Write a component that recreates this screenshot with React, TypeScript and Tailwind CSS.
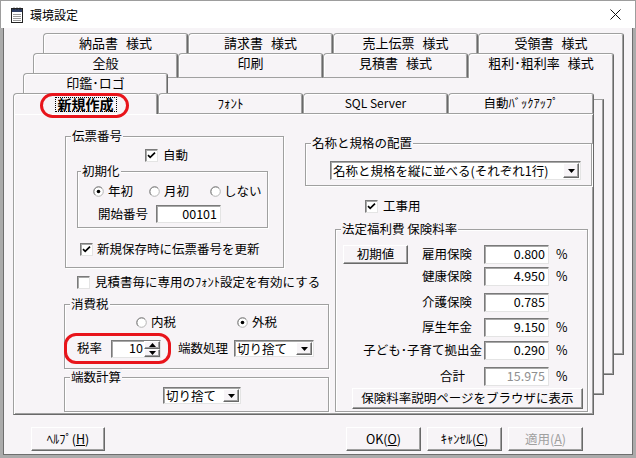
import React from "react";

const sunken =
  "bg-white border border-t-[#7a7a7a] border-l-[#7a7a7a] border-r-[#e4e4e4] border-b-[#e4e4e4] shadow-[inset_1px_1px_0_#a8a8a8]";
const raised =
  "bg-[#f7f4f7] border border-t-white border-l-white border-r-[#696969] border-b-[#696969] shadow-[inset_-1px_-1px_0_#a0a0a0]";

function Check({ checked = false }: { checked?: boolean }) {
  return (
    <span className={`inline-flex h-[13px] w-[13px] shrink-0 items-center justify-center ${sunken}`}>
      {checked && (
        <svg width="9" height="9" viewBox="0 0 9 9">
          <path d="M1 4.2 L3.2 6.4 L8 1.6" fill="none" stroke="#000" strokeWidth="1.7" />
        </svg>
      )}
    </span>
  );
}

function Radio({ on = false }: { on?: boolean }) {
  return (
    <svg width="11" height="11" viewBox="0 0 11 11" className="shrink-0">
      <circle cx="5.5" cy="5.5" r="4.8" fill="#fff" stroke="#b4b4b4" />
      <path d="M2.11 8.89 A4.8 4.8 0 0 1 8.89 2.11" fill="none" stroke="#808080" />
      {on && <circle cx="5.5" cy="5.5" r="1.8" fill="#000" />}
    </svg>
  );
}

function Group({
  title,
  className = "",
  titleClass = "ml-[5px]",
  children,
}: {
  title: string;
  className?: string;
  titleClass?: string;
  children?: React.ReactNode;
}) {
  return (
    <div className={`border border-[#a0a0a0] shadow-[inset_1px_1px_0_#ffffff,1px_1px_0_#ffffff] ${className}`}>
      <div className={`-mt-[9px] w-fit bg-[#f7f4f7] px-[1px] leading-[16px] ${titleClass}`}>{title}</div>
      {children}
    </div>
  );
}

function Field({ value, className = "", disabled = false }: { value: string; className?: string; disabled?: boolean }) {
  return (
    <div
      className={`${sunken} flex items-center justify-end pr-[3px] leading-none ${disabled ? "text-[#8f8f8f]" : ""} ${className}`}
    >
      {value}
    </div>
  );
}

function Dropdown({ text, className = "" }: { text: string; className?: string }) {
  return (
    <div className={`${sunken} flex items-stretch p-[1px] ${className}`}>
      <span className="flex flex-1 items-center whitespace-nowrap pl-[1px] leading-[14px]">{text}</span>
      <span className={`${raised} flex w-[16px] shrink-0 items-center justify-center`}>
        <svg width="7" height="4" viewBox="0 0 7 4">
          <path d="M0 0H7L3.5 4Z" fill="#000" />
        </svg>
      </span>
    </div>
  );
}

function Spin() {
  return (
    <div className={`${sunken} flex h-[18px] w-[50px]`}>
      <span className="flex flex-1 items-center justify-end pr-[1px] leading-none">10</span>
      <span className="flex w-[16px] flex-col">
        <span className={`${raised} flex flex-1 items-center justify-center`}>
          <svg width="7" height="4" viewBox="0 0 7 4">
            <path d="M3.5 0L7 4H0Z" fill="#000" />
          </svg>
        </span>
        <span className={`${raised} flex flex-1 items-center justify-center`}>
          <svg width="7" height="4" viewBox="0 0 7 4">
            <path d="M0 0H7L3.5 4Z" fill="#000" />
          </svg>
        </span>
      </span>
    </div>
  );
}

function Btn({ children, className = "" }: { children: React.ReactNode; className?: string }) {
  return <div className={`${raised} flex items-center justify-center leading-none ${className}`}>{children}</div>;
}

function NoteIcon() {
  return (
    <svg width="14" height="16" viewBox="0 0 14 16" className="shrink-0">
      <rect x="1.5" y="1.5" width="11" height="14" fill="#fff" stroke="#222" />
      <rect x="2" y="2" width="10" height="3" fill="#2f3f66" />
      <path d="M3 7.5H11M3 9.5H11M3 11.5H11M3 13.5H11" stroke="#9a9a9a" />
      <path d="M4 0.5V3M7 0.5V3M10 0.5V3" stroke="#222" />
    </svg>
  );
}

const tabBase =
  "relative flex shrink-0 justify-center border-t border-l border-[#a0a0a0] border-r border-r-[#696969] rounded-tl-[4px] rounded-tr-[3px] bg-[#f7f4f7] shadow-[inset_1px_1px_0_#ffffff,inset_-1px_0_0_#a0a0a0]";
const widths = ["w-[145px]", "w-[145px]", "w-[145px]", "w-[146px]"];

function TabLabel({ a, b }: { a: string; b?: string }) {
  return (
    <span className="whitespace-nowrap text-[13px] leading-[18px]">
      {a}
      {b && <span className="ml-[8px]">{b}</span>}
    </span>
  );
}

function TabControl() {
  const row1: [string, string][] = [
    ["納品書", "様式"],
    ["請求書", "様式"],
    ["売上伝票", "様式"],
    ["受領書", "様式"],
  ];
  const row2: [string, string | undefined][] = [
    ["全般", undefined],
    ["印刷", undefined],
    ["見積書", "様式"],
    ["粗利･粗利率", "様式"],
  ];
  return (
    <div className="relative ml-[9px] mt-[5px] h-[383px] w-[613px] shrink-0">
      {/* stacked back pages */}
      <div className="absolute left-0 top-[20px] h-[302px] w-[611px] border-r border-b border-[#696969] bg-[#f7f4f7] shadow-[inset_-1px_-1px_0_#a0a0a0]" />
      <div className="absolute left-0 top-[45px] h-[297px] w-[601px] border-r border-b border-[#696969] bg-[#f7f4f7] shadow-[inset_-1px_-1px_0_#a0a0a0]" />
      <div className="absolute left-0 top-[66px] h-[296px] w-[591px] border-t border-t-[#a0a0a0] border-r border-b border-r-[#696969] border-b-[#696969] bg-[#f7f4f7] shadow-[inset_-1px_-1px_0_#a0a0a0]" />

      {/* row 1 */}
      <div className="relative z-10 ml-[30px] flex h-[20px]">
        {row1.map(([a, b], i) => (
          <div key={a} className={`${tabBase} h-[20px] ${widths[i]}`}>
            <TabLabel a={a} b={b} />
          </div>
        ))}
      </div>
      {/* row 2 */}
      <div className="relative z-10 ml-[20px] flex h-[20px]">
        {row2.map(([a, b], i) => (
          <div
            key={a}
            className={`${tabBase} h-[25px] ${widths[i]} ${i < 3 ? "border-b border-b-[#a0a0a0]" : ""}`}
          >
            <TabLabel a={a} b={b} />
          </div>
        ))}
      </div>
      {/* row 3 */}
      <div className="relative z-10 ml-[10px] flex h-[20px]">
        <div className={`${tabBase} h-[20px] w-[145px]`}>
          <TabLabel a="印鑑･ロゴ" />
        </div>
      </div>
      {/* front row */}
      <div className="relative z-20 flex h-[20px]">
        <div className={`${tabBase} h-[21px] w-[145px]`}>
          <span className="mt-[3px] h-[15px] border border-dotted border-black px-[2px] text-[14px] font-bold leading-[13px]">
            新規作成
          </span>
          <span className="pointer-events-none absolute left-[26px] top-[-1px] h-[25px] w-[89px] rounded-[13px] border-[3px] border-[#e8141b]" />
        </div>
        <div className={`${tabBase} h-[20px] w-[145px]`}>
          <span className="text-[13px] leading-[18px]">ﾌｫﾝﾄ</span>
        </div>
        <div className={`${tabBase} h-[20px] w-[145px]`}>
          <span className="text-[12px] leading-[18px]">SQL Server</span>
        </div>
        <div className={`${tabBase} h-[20px] w-[146px]`}>
          <span className="text-[12.5px] leading-[18px]">自動ﾊﾞｯｸｱｯﾌﾟ</span>
        </div>
      </div>

      {/* front page */}
      <div className="relative z-10 flex h-[302px] w-[581px] border-t border-l border-[#a0a0a0] border-r border-b border-r-[#696969] border-b-[#696969] bg-[#f7f4f7] pl-[50px] text-[12.5px] shadow-[inset_1px_1px_0_#ffffff,inset_-1px_-1px_0_#a0a0a0]">
        {/* left column */}
        <div className="flex w-[265px] shrink-0 flex-col">
          <Group title="伝票番号" className="ml-[1px] mt-[22px] h-[132px] w-[219px]">
            <div className="ml-[79px] mt-[3px] flex h-[16px] items-center gap-[5px]">
              <Check checked />
              <span className="leading-none">自動</span>
            </div>
            <Group title="初期化" titleClass="ml-[3px]" className="ml-[11px] mt-[8px] h-[57px] w-[191px]">
              <div className="ml-[15px] mt-[4px] flex h-[16px] items-center">
                <div className="flex w-[56px] items-center gap-[4px]">
                  <Radio on />
                  <span className="leading-none">年初</span>
                </div>
                <div className="flex w-[61px] items-center gap-[4px]">
                  <Radio />
                  <span className="leading-none">月初</span>
                </div>
                <div className="flex items-center gap-[3px]">
                  <Radio />
                  <span className="leading-none">しない</span>
                </div>
              </div>
              <div className="ml-[20px] mt-[6px] flex h-[18px] items-center">
                <span className="w-[58px] leading-none">開始番号</span>
                <Field value="00101" className="h-[18px] w-[65px]" />
              </div>
            </Group>
            <div className="ml-[14px] mt-[13px] flex h-[16px] items-center gap-[4px]">
              <Check checked />
              <span className="leading-none">新規保存時に伝票番号を更新</span>
            </div>
          </Group>

          <div className="ml-[13px] mt-[6px] flex h-[16px] items-center gap-[5px]">
            <Check />
            <span className="whitespace-nowrap leading-none">見積書毎に専用のﾌｫﾝﾄ設定を有効にする</span>
          </div>

          <Group title="消費税" className="mt-[14px] h-[65px] w-[265px]">
            <div className="ml-[71px] mt-[2px] flex h-[16px] items-center">
              <div className="flex w-[101px] items-center gap-[4px]">
                <Radio />
                <span className="leading-none">内税</span>
              </div>
              <div className="flex items-center gap-[4px]">
                <Radio on />
                <span className="leading-none">外税</span>
              </div>
            </div>
            <div className="mt-[3px] flex h-[31px] items-center">
              <div className="-ml-[1px] flex h-[31px] w-[107px] shrink-0 items-center rounded-[12px] border-[3px] border-[#e8141b] pl-[10px]">
                <span className="w-[34px] leading-none">税率</span>
                <Spin />
              </div>
              <span className="ml-[7px] w-[56px] leading-none">端数処理</span>
              <Dropdown text="切り捨て" className="h-[17px] w-[80px]" />
            </div>
          </Group>

          <Group title="端数計算" className="mt-[8px] h-[35px] w-[265px]">
            <Dropdown text="切り捨て" className="ml-[98px] mt-[2px] h-[17px] w-[78px]" />
          </Group>
        </div>

        {/* right column */}
        <div className="ml-[6px] flex w-[253px] shrink-0 flex-col">
          <Group title="名称と規格の配置" className="-ml-[30px] mt-[29px] h-[43px] w-[287px]">
            <Dropdown
              text="名称と規格を縦に並べる(それぞれ1行)"
              className="ml-[24px] mt-[10px] h-[19px] w-[251px]"
            />
          </Group>

          <div className="ml-[30px] mt-[12px] flex h-[16px] items-center gap-[5px]">
            <Check checked />
            <span className="leading-none">工事用</span>
          </div>

          <Group title="法定福利費 保険料率" className="mt-[15px] h-[183px] w-[253px]">
            <div className="mt-[8px] flex h-[19px] items-center">
              <div className="flex w-[148px] items-center pr-[12px]">
                <Btn className="ml-[7px] h-[19px] w-[65px]">初期値</Btn>
                <span className="ml-auto whitespace-nowrap leading-none">雇用保険</span>
              </div>
              <Field value="0.800" className="h-[19px] w-[65px]" />
              <span className="ml-[7px] leading-none">%</span>
            </div>
            <div className="mt-[3px] flex h-[19px] items-center">
              <div className="flex w-[148px] justify-end pr-[12px]">
                <span className="whitespace-nowrap leading-none">健康保険</span>
              </div>
              <Field value="4.950" className="h-[19px] w-[65px]" />
              <span className="ml-[7px] leading-none">%</span>
            </div>
            <div className="mt-[7px] flex h-[19px] items-center">
              <div className="flex w-[148px] justify-end pr-[12px]">
                <span className="whitespace-nowrap leading-none">介護保険</span>
              </div>
              <Field value="0.785" className="h-[19px] w-[65px]" />
            </div>
            <div className="mt-[6px] flex h-[19px] items-center">
              <div className="flex w-[148px] justify-end pr-[12px]">
                <span className="whitespace-nowrap leading-none">厚生年金</span>
              </div>
              <Field value="9.150" className="h-[19px] w-[65px]" />
              <span className="ml-[7px] leading-none">%</span>
            </div>
            <div className="mt-[4px] flex h-[19px] items-center">
              <div className="flex w-[148px] justify-end pr-[2px]">
                <span className="whitespace-nowrap leading-none">子ども･子育て拠出金</span>
              </div>
              <Field value="0.290" className="h-[19px] w-[65px]" />
              <span className="ml-[7px] leading-none">%</span>
            </div>
            <div className="mt-[7px] flex h-[19px] items-center">
              <div className="flex w-[148px] justify-end pr-[19px]">
                <span className="whitespace-nowrap leading-none">合計</span>
              </div>
              <Field value="15.975" disabled className="h-[19px] w-[65px]" />
              <span className="ml-[7px] leading-none">%</span>
            </div>
            <Btn className="ml-[16px] mt-[2px] h-[21px] w-[231px] whitespace-nowrap">保険料率説明ページをブラウザに表示</Btn>
          </Group>
        </div>
      </div>
    </div>
  );
}

export default function App() {
  return (
    <div className="flex h-[458px] w-[636px] flex-col overflow-hidden bg-[#ababab] font-['Noto_Sans_CJK_JP',sans-serif] text-black">
      <div className="flex h-[28px] shrink-0 items-center border-x border-t border-[#9d9d9d] bg-white pl-[9px] pr-[14px]">
        <NoteIcon />
        <span className="ml-[6px] text-[12px] leading-none">環境設定</span>
        <svg className="ml-auto" width="11" height="11" viewBox="0 0 11 11">
          <path d="M0.5 0.5L10.5 10.5M10.5 0.5L0.5 10.5" stroke="#111" strokeWidth="1" />
        </svg>
      </div>
      <div className="mx-[3px] mb-[3px] flex flex-1 flex-col border-x border-b border-[#6e6e6e] bg-[#f7f4f7]">
        <TabControl />
        <div className="ml-[27px] mt-[11px] flex text-[12.5px]">
          <Btn className="h-[24px] w-[74px]">
            ﾍﾙﾌﾟ(<u>H</u>)
          </Btn>
          <Btn className="ml-[241px] h-[24px] w-[75px]">
            OK(<u>O</u>)
          </Btn>
          <Btn className="ml-[6px] h-[24px] w-[75px]">
            ｷｬﾝｾﾙ(<u>C</u>)
          </Btn>
          <Btn className="ml-[6px] h-[24px] w-[75px] text-[#a0a0a0]">
            適用(<u>A</u>)
          </Btn>
        </div>
      </div>
    </div>
  );
}
